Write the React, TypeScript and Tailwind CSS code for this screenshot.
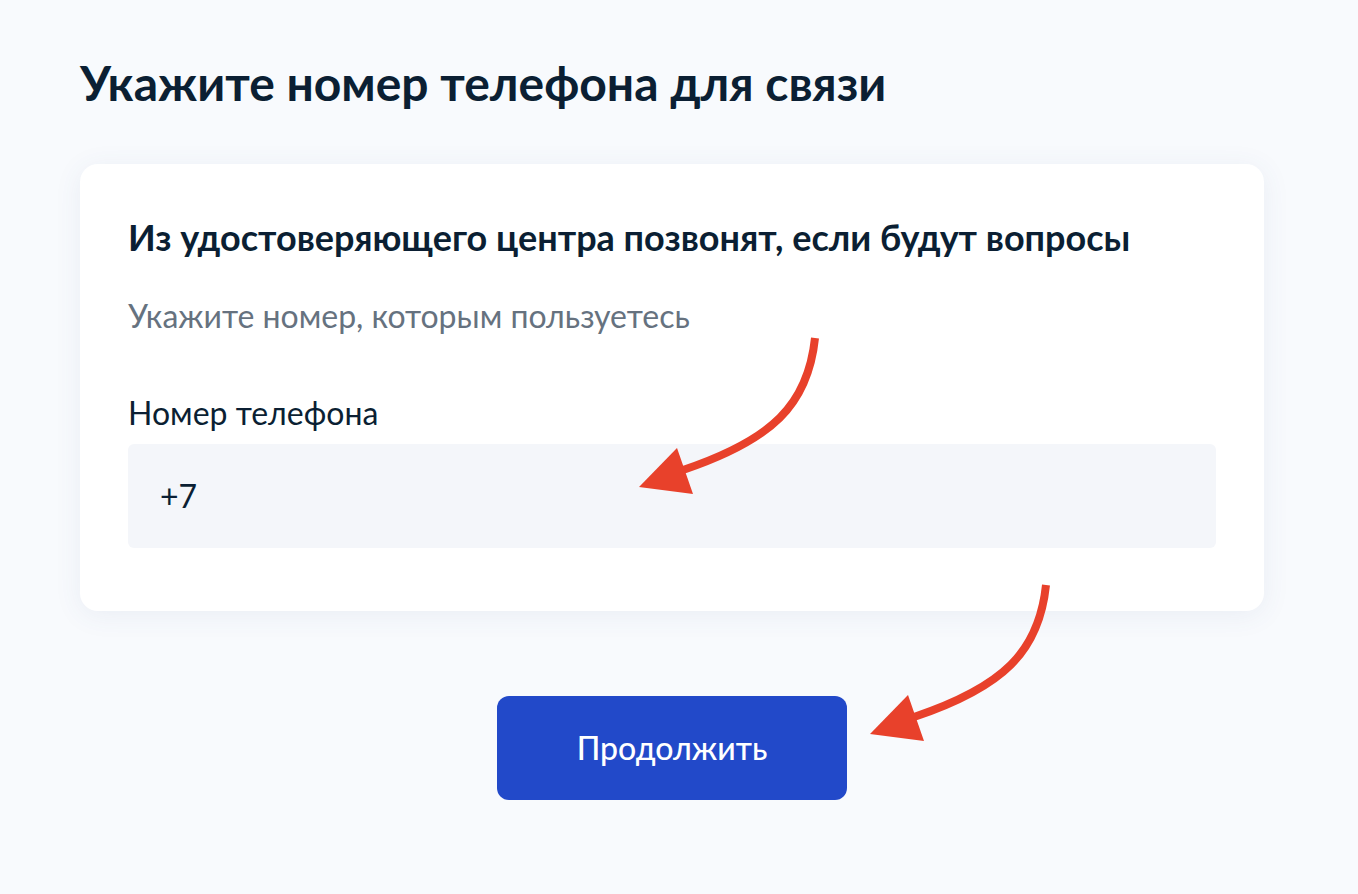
// Phone contact step: heading, white card with phone field, continue button,
// plus two red hand-drawn arrows laid over the page as annotations.

const font = "font-['Lato','Noto_Sans',sans-serif]";

function Arrows() {
  // annotation overlay, coordinates are the picture itself
  return (
    <svg
      className="pointer-events-none absolute left-0 top-0"
      width="1358"
      height="894"
      viewBox="0 0 1358 894"
    >
      <g fill="#e8412b" stroke="none">
        <path d="M815 338 C 808 405 772 440 683 470" fill="none" stroke="#e8412b" strokeWidth="8" />
        <polygon points="677,448 639,487 693,494" />
      </g>
      <g fill="#e8412b" stroke="none" transform="translate(231 247)">
        <path d="M815 338 C 808 405 772 440 683 470" fill="none" stroke="#e8412b" strokeWidth="8" />
        <polygon points="677,448 639,487 693,494" />
      </g>
    </svg>
  );
}

export default function App() {
  return (
    <div className={`relative h-[894px] w-[1358px] overflow-hidden bg-[#f8fafd] ${font}`}>
      <div className="flex flex-col px-20 pt-[55px]">
        <h1 className="text-[48px] font-bold leading-[56px] text-[#0b1f33]">
          Укажите номер телефона для связи
        </h1>

        <div className="mt-[53px] w-[1184px] rounded-[18px] bg-white px-12 pb-[63px] pt-[52px] shadow-[0_4px_28px_rgba(70,90,140,0.08)]">
          <h2 className="text-[36px] font-bold leading-[42px] text-[#0b1f33]">
            Из удостоверяющего центра позвонят, если будут вопросы
          </h2>
          <p className="mt-[38px] text-[32px] leading-[40px] text-[#66727f]">
            Укажите номер, которым пользуетесь
          </p>
          <label className="mt-[57px] block text-[32px] leading-[40px] text-[#0b1f33]">
            Номер телефона
          </label>
          <div className="mt-[11px] flex h-[104px] items-center rounded-[6px] bg-[#f4f6fa] px-8 text-[32px] text-[#0b1f33]">
            +7
          </div>
        </div>

        <div className="mt-[85px] flex w-[1184px] justify-center">
          <button className="h-[104px] w-[350px] rounded-[12px] bg-[#2249c9] text-[32px] font-medium text-white">
            Продолжить
          </button>
        </div>
      </div>
      <Arrows />
    </div>
  );
}
